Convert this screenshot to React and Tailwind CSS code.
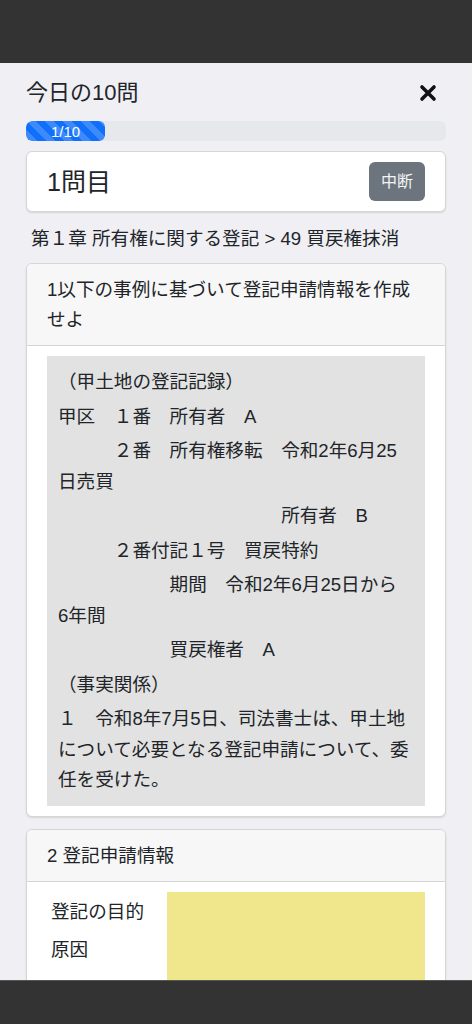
import { useState } from "react";

const jp = { fontFamily: '"Liberation Sans", "Noto Sans CJK JP", "Noto Sans", sans-serif' };

function CloseIcon() {
  return (
    <svg width="18" height="18" viewBox="0 0 18 18" aria-hidden="true">
      <path d="M3 3 L15 15 M15 3 L3 15" stroke="#111" strokeWidth="3.6" strokeLinecap="round" />
    </svg>
  );
}

function Progress({ current, total }) {
  const pct = (current / total) * 100;
  return (
    <div className="h-[20px] w-full rounded-[6px] bg-[#e6e8eb] overflow-hidden flex">
      <div
        className="h-full rounded-[6px] bg-[#1170fb] bg-[linear-gradient(45deg,rgba(255,255,255,.18)_25%,transparent_25%,transparent_50%,rgba(255,255,255,.18)_50%,rgba(255,255,255,.18)_75%,transparent_75%,transparent)] bg-[length:18px_18px] flex items-center justify-center text-white text-[15px] leading-none"
        style={{ width: `${Math.max(pct, 18.8)}%` }}
      >
        {current}/{total}
      </div>
    </div>
  );
}

const record = [
  "（甲土地の登記記録）",
  "甲区　１番　所有者　A",
  ["　　　２番　所有権移転　令和2年6月25", "日売買"],
  "　　　　　　　　　　　　所有者　B",
  "　　　２番付記１号　買戻特約",
  ["　　　　　　期間　令和2年6月25日から", "6年間"],
  "　　　　　　買戻権者　A",
  "（事実関係）",
  ["１　令和8年7月5日、司法書士は、甲土地", "について必要となる登記申請について、委", "任を受けた。"],
];

export default function App() {
  const [paused, setPaused] = useState(false);

  return (
    <div className="min-h-screen bg-[#efeff4] text-[#212529]" style={jp}>
      <div className="h-[63px] bg-[#333333]" />

      <div className="px-[26px] pt-[14px] pb-[80px]">
        <div className="flex items-center justify-between">
          <h1 className="text-[22px] leading-[32px] font-normal">今日の10問</h1>
          <button className="mr-[9px] p-0">
            <CloseIcon />
          </button>
        </div>

        <div className="mt-[12px]">
          <Progress current={1} total={10} />
        </div>

        <div className="mt-[10px] bg-white border border-[#d6d6d6] rounded-[6px] shadow-[0_1px_2px_rgba(0,0,0,0.12)] px-[20px] py-[10px] flex items-center justify-between">
          <div className="text-[25px] leading-[32px]">1問目</div>
          <button
            onClick={() => setPaused(!paused)}
            className="h-[39px] w-[56px] rounded-[6px] bg-[#6c757d] text-[#f4f4f4] text-[16px]"
          >
            中断
          </button>
        </div>

        <div className="mt-[12px] pl-[5px] text-[18.6px] leading-[30px]">
          第１章 所有権に関する登記 &gt; 49 買戻権抹消
        </div>

        <div className="mt-[9px] bg-white border border-[#d6d6d6] rounded-[6px] shadow-[0_1px_2px_rgba(0,0,0,0.12)] overflow-hidden">
          <div className="bg-[#f7f7f7] border-b border-[#d6d6d6] px-[20px] pt-[11px] pb-[10px] text-[18.6px] leading-[30px]">
            1以下の事例に基づいて登記申請情報を作成
            <br />
            せよ
          </div>
          <div className="px-[20px] pt-[10px] pb-[10px]">
            <div className="bg-[#e2e2e2] px-[11px] pt-[11px] pb-[10px] flex flex-col gap-[4px] text-[18.6px] leading-[30.5px] whitespace-pre">
              {record.map((line, i) => (
                <div key={i}>
                  {Array.isArray(line)
                    ? line.map((part, j) => (
                        <span key={j}>
                          {part}
                          {j < line.length - 1 && <br />}
                        </span>
                      ))
                    : line}
                </div>
              ))}
            </div>
          </div>
        </div>

        <div className="mt-[12px] bg-white border border-[#d6d6d6] rounded-[6px] shadow-[0_1px_2px_rgba(0,0,0,0.12)] overflow-hidden">
          <div className="bg-[#f7f7f7] border-b border-[#d6d6d6] px-[20px] pt-[11px] pb-[10px] text-[18.6px] leading-[30px]">
            2 登記申請情報
          </div>
          <div className="px-[20px] pt-[10px] pb-[10px] flex">
            <div className="w-[120px] shrink-0 pl-[4px] pt-[5px] flex flex-col gap-[8px] text-[18.6px] leading-[30px]">
              <div>登記の目的</div>
              <div>原因</div>
            </div>
            <div className="flex-1 h-[260px] bg-[#f0e68c]" />
          </div>
        </div>
      </div>

      <div className="fixed bottom-0 left-0 right-0 h-[44px] bg-[#333333] border-t border-[#555555]" />
    </div>
  );
}
